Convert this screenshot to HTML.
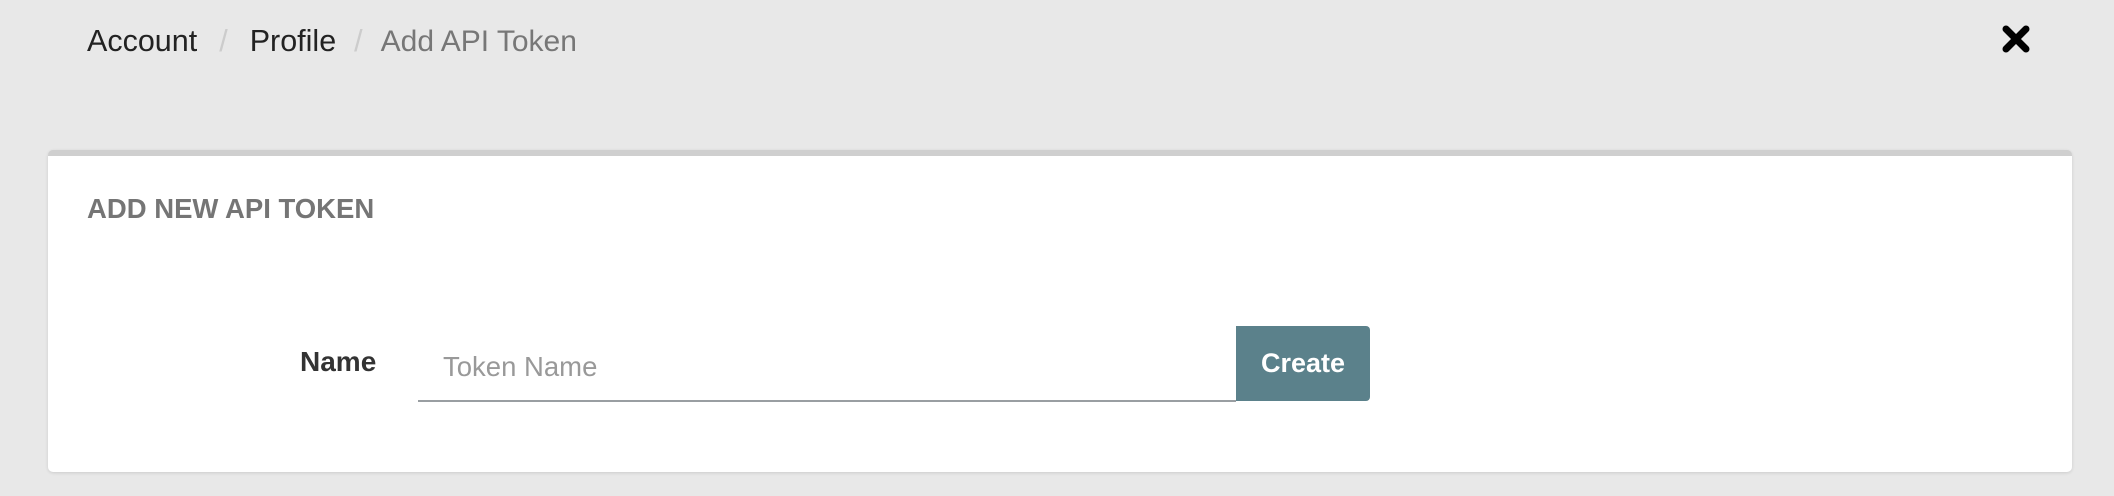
<!DOCTYPE html>
<html><head><style>
html,body{margin:0;padding:0;width:2114px;height:496px;background:#e8e8e8;overflow:hidden;font-family:"Liberation Sans",sans-serif;position:relative}
.bc{position:absolute;top:21px;left:87px;font-size:30.5px;color:#222;white-space:nowrap;line-height:40px}
.bc .s{color:#ccc;margin:0 22px}
.bc .s2{margin:0 18px}
.bc .cur{color:#777;font-size:30px}
.x{position:absolute;left:2001px;top:25px}
.card{position:absolute;left:48px;top:150px;width:2024px;height:322px;background:#fff;border-top:6px solid #cfcfcf;border-radius:5px;box-sizing:border-box;box-shadow:0 1px 3px rgba(0,0,0,.12)}
.title{position:absolute;left:39px;top:37px;font-size:27.5px;font-weight:bold;color:#757575}
.name{position:absolute;left:252px;top:190px;font-size:28px;font-weight:bold;color:#333}
.inp{position:absolute;left:370px;top:170px;width:818px;height:76px;border-bottom:2px solid #999ea2;box-sizing:border-box}
.ph{position:absolute;left:395px;top:195px;font-size:27.5px;color:#999}
.btn{position:absolute;left:1188px;top:170px;width:134px;height:75px;background:#5b818b;border-radius:0 4px 4px 0;color:#fff;font-size:27px;font-weight:bold;text-align:center;line-height:75px}
</style></head><body>
<div class="bc">Account<span class="s">/</span>Profile<span class="s s2">/</span><span class="cur">Add API Token</span></div>
<svg class="x" width="30" height="28" viewBox="0 0 30 28"><path d="M5 4 L25 24 M25 4 L5 24" stroke="#000" stroke-width="7" stroke-linecap="round"/></svg>
<div class="card">
<div class="title">ADD NEW API TOKEN</div>
<div class="name">Name</div>
<div class="inp"></div>
<div class="ph">Token Name</div>
<div class="btn">Create</div>
</div>
</body></html>
